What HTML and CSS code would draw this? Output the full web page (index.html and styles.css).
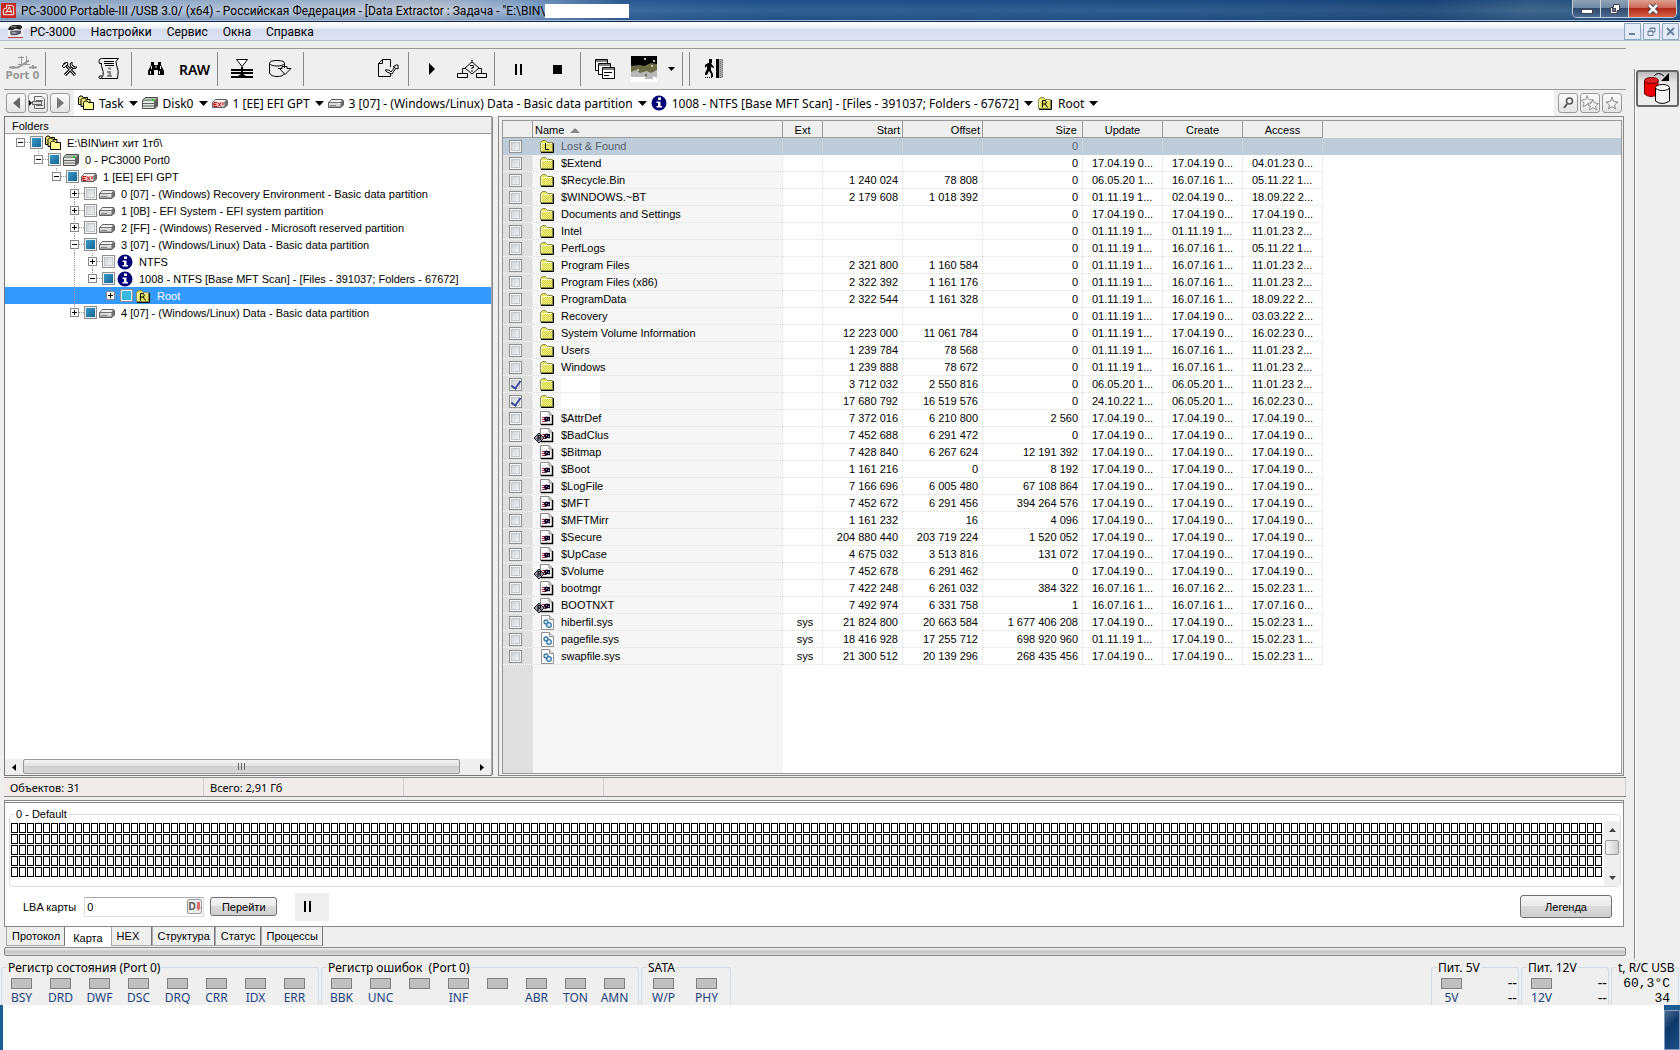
FILE: index.html
```html
<!DOCTYPE html>
<html lang="ru">
<head>
    <meta charset="UTF-8">
    <meta name="viewport" content="width=device-width, initial-scale=1.0">
    <title>PC-3000 Portable-III - Data Extractor</title>
    <link rel="stylesheet" href="styles.css">
</head>
<body>
    <!-- Набор иконок -->
    <svg class="sprite" width="0" height="0" aria-hidden="true">
        <defs>
            <pattern id="dither" width="2" height="2" patternUnits="userSpaceOnUse">
                <rect width="2" height="2" fill="#f2f27c"/><rect width="1" height="1" fill="#d4d44c"/><rect x="1" y="1" width="1" height="1" fill="#d4d44c"/>
            </pattern>
        </defs>
        <symbol id="i-folder" viewBox="0 0 16 16">
            <path d="M1.5 13.5V4.5L3.5 2.5H6.5L8.5 4.5H13.5V13.5Z" fill="url(#dither)" stroke="#8a8a4a"/>
            <path d="M14.5 5V14.5H2" fill="none" stroke="#000"/><path d="M2.500 12.500V5.500H12.500" fill="none" stroke="#fbfbc8"/>
        </symbol>
        <symbol id="i-root" viewBox="0 0 16 16">
            <use href="#i-folder"/><path d="M5.500 12.500V5.500H8.500Q10 7 8.500 9H6M8 9L10.500 12.500" fill="none" stroke="#000"/>
        </symbol>
        <symbol id="i-lost" viewBox="0 0 16 16">
            <use href="#i-folder"/><path d="M6.500 5V11.500H10" fill="none" stroke="#000"/>
        </symbol>
        <symbol id="i-task" viewBox="0 0 16 16">
            <path d="M.5 9.500V2.500L2 1H4L5.500 2.500H9.500V9.500Z" fill="#e8e070" stroke="#000"/>
            <path d="M3 11.500V4.500L4.500 3H6.500L8 4.500H12V11.500Z" fill="#e8e070" stroke="#000"/>
            <path d="M5.500 14.500V7.500L7 6H9L10.500 7.500H15.500V14.500Z" fill="#ffff90" stroke="#000"/>
        </symbol>
        <symbol id="i-disk" viewBox="0 0 16 16">
            <path d="M3 2.500H15.500V11L13 13.500H.5V5.500Z" fill="#606060" stroke="#505050"/>
            <path d="M3 3H15L13 5.500H1Z" fill="#a8b8a8"/><path d="M1 6H12V8H1ZM1 9H12V10.500H1ZM1 11.500H12V13H1Z" fill="#e4e8e4"/>
            <rect x="10" y="4" width="2" height="2" fill="#20d020"/>
        </symbol>
        <symbol id="i-part" viewBox="0 0 16 16">
            <path d="M3.500 4.500H14.500L15.500 6V10L13 12.500H.5V7.500Z" fill="#707070" stroke="#606060"/>
            <path d="M3.500 5H14L12.500 7H1.500Z" fill="#f0f0f0"/><path d="M1 8H12.500V11.500H1Z" fill="#d8d8d8"/><path d="M2 10.500H8" stroke="#888"/><rect x="10" y="8" width="2" height="1" fill="#fff"/>
        </symbol>
        <symbol id="i-ex" viewBox="0 0 16 16">
            <use href="#i-part"/><path d="M1 7H12V12H1Z" fill="#f0c8c8"/>
            <path d="M5 7.500H2V11.500H5M2 9.500H4.500M6 7.500L9 11.500M9 7.500L6 11.500M11 7.500V10" fill="none" stroke="#c00000"/>
        </symbol>
        <symbol id="i-info" viewBox="0 0 16 16">
            <circle cx="8" cy="8" r="7.500" fill="#000078"/><path d="M7 2.500H10V5H7ZM5.500 6.500H9.500V11H11V12.500H5.500V11H7V8H5.500Z" fill="#fff"/>
        </symbol>
        <symbol id="i-file" viewBox="0 0 16 16">
            <path d="M1.500 14.500V1.500H10L13.500 5V14.500Z" fill="#fff" stroke="#888"/><path d="M13.500 5V14.500H2" fill="none" stroke="#000" stroke-width="1.500"/><path d="M10 1.500V5H13" fill="none" stroke="#888"/>
            <path d="M3 7.500H6M3 9.500H6M3 11.500H6" stroke="#b02040"/><path d="M5 8L7 6.500L10 7L11 6.500V11.500L9 11L8 11.500L6 12Z" fill="#100020"/><path d="M7 8.500H8M9 9.500H10" stroke="#a0a8e0"/>
        </symbol>
        <symbol id="i-resident" viewBox="0 0 20 16">
            <path d="M0 11L5 6L10 11L5 16Z" fill="#9898a8" stroke="#202030"/><path d="M4 14V8.500H6.500V11H4M5.500 11L7 13" fill="none" stroke="#000"/>
        </symbol>
        <symbol id="i-sys" viewBox="0 0 16 16">
            <path d="M2.500 15.500V1.500H10.500L14.500 5.500V15.500Z" fill="#fcfcfc" stroke="#909090"/><path d="M10.500 1.500V5.500H14.500" fill="#e0e0e0" stroke="#909090"/>
            <circle cx="7" cy="8" r="2" fill="#d8ecfa" stroke="#3878a8" stroke-width="1.300"/><circle cx="10" cy="11" r="2.300" fill="#d8ecfa" stroke="#3878a8" stroke-width="1.300"/>
        </symbol>
    </svg>

    <header class="titlebar">
        <svg class="app-logo" viewBox="0 0 16 16"><rect width="16" height="16" fill="#c42a22"/><path d="M2.500 12.500V8Q2.500 5.500 6 5.500V2.500H11Q13.500 2.500 13.500 5.500V12.500ZM5 11L9 4L11.500 11M5 9H11" fill="none" stroke="#fff"/></svg>
        <h1>PC-3000 Portable-III /USB 3.0/ (x64) - Российская Федерация - [Data Extractor : Задача - "E:\BIN\</h1>
        <span class="title-blank"></span>
        <div class="win-buttons">
            <button type="button" aria-label="Свернуть"><svg width="12" height="12"><rect x="0.500" y="6.500" width="11" height="4" fill="#fff" stroke="#445"/></svg></button>
            <button type="button" aria-label="Восстановить"><svg width="12" height="12"><path d="M4.500 1.500H10.500V7.500H8V10.500H1.500V4.500H4.500Z" fill="#fff" stroke="#445"/><rect x="3.500" y="5.500" width="3" height="3" fill="#778" stroke="#445"/></svg></button>
            <button type="button" class="win-close" aria-label="Закрыть"><svg width="12" height="12"><path d="M2 2L10 10M10 2L2 10" stroke="#434" stroke-width="4.500"/><path d="M2 2L10 10M10 2L2 10" stroke="#fff" stroke-width="2.500"/></svg></button>
        </div>
    </header>

    <nav class="menubar">
        <svg class="menu-logo" viewBox="0 0 16 16"><rect width="16" height="13" fill="#f4f4f4"/><path d="M0 6Q1 1 7 1H12Q15 1 15 4L13 6L8 5L4 7Z" fill="#222"/><path d="M3 3H9" stroke="#999"/><path d="M2 8L8 7L14 7V10L9 12H3Z" fill="#556"/><path d="M4 9.500H9" stroke="#ddd"/><path d="M0 14.500H16" stroke="#b83030"/></svg>
        <a href="#">PC-3000</a>
        <a href="#">Настройки</a>
        <a href="#">Сервис</a>
        <a href="#">Окна</a>
        <a href="#">Справка</a>
        <div class="mdi-buttons">
            <button type="button" aria-label="Свернуть окно"><svg width="9" height="9"><path d="M1 7H7" stroke="#68809a" stroke-width="2"/></svg></button>
            <button type="button" aria-label="Восстановить окно"><svg width="9" height="9"><path d="M3 3V1H8V5H6M3 1.500H8M1 4H6V8.500H1ZM1 4.500H6" fill="none" stroke="#68809a"/></svg></button>
            <button type="button" aria-label="Закрыть окно"><svg width="9" height="9"><path d="M1 1L8 8M8 1L1 8" stroke="#68809a" stroke-width="2"/></svg></button>
        </div>
    </nav>

    <div class="workspace">
        <main>
            <div class="toolbar">
                <div class="tool-group first">
                    <button type="button" class="port" disabled><svg width="28" height="13"><path d="M12.500 0V8M17.500 0V8M9 1.500H15M9 8.500H21" stroke="#999"/><path d="M0 11.500H9L20 4.500M20 11.500H28M4 10V13M24 9V13" fill="none" stroke="#999" stroke-width="2"/></svg><span>Port 0</span></button>
                </div>
                <div class="tool-group">
                    <button type="button" aria-label="Инструменты"><svg width="16" height="16"><path d="M2 2L13 14M3 14L12 5" stroke="#000" stroke-width="3"/><path d="M3 3L13 14M3 14L12 5" stroke="#fff"/><path d="M0 5L5 1L6 3L2 7ZM10 1V4L12 6H15L13 8L9 6L8 3Z" fill="#fff" stroke="#000"/></svg></button>
                    <button type="button" aria-label="Информация"><svg width="22" height="24"><path d="M3.500 1.500H20.500Q16.500 4 18.500 8Q21.500 14 19.500 21.500H3Q7 18 4 11Q3 8 3.500 6.500H1.500Q0 2 3.500 1.500ZM3 21.500Q0 22 1.500 19H4" fill="none" stroke="#000"/><path d="M6 4.500H16M6 6.500H16M7 8.500H16" stroke="#000"/><path d="M10 10.500H13V12.500H10ZM9 14H13V18H14V20H9V18H10.500V16H9Z" fill="#888"/></svg></button>
                </div>
                <div class="tool-group">
                    <button type="button" aria-label="Поиск"><svg width="16" height="14"><path d="M3 0H6V3H10V0H13V3L16 9V13H10V8H6V13H0V9L3 3Z"/><path d="M3.500 4V7M12.500 4V7M2.500 9V12M11.500 9V12M8 3.500V6" stroke="#eee"/></svg></button>
                    <button type="button" class="raw">RAW</button>
                </div>
                <div class="tool-group">
                    <button type="button" aria-label="Фильтр"><svg width="22" height="20"><path d="M5.500 .5H16.500L11 7.500Z" fill="#fff" stroke="#000"/><path d="M0 10H22V12H0ZM0 13H22V15H0ZM0 17H7L10 15H12L15 17H22V19H0ZM10 8H12V18H10Z"/></svg></button>
                    <button type="button" aria-label="Сохранить диск"><svg width="23" height="18"><path d="M.5 3.500Q.5 .5 8 .5T15.500 3.500V8M.5 3.500V13Q2 16.500 8 16.500T15.500 13.500M.5 3.500Q2 6 8 6T15.500 3.500M9 8.500H13V6.500H18V8.500H22L16 14.500L11 9" fill="none" stroke="#000"/></svg></button>
                </div>
                <div class="tool-group wide">
                    <button type="button" aria-label="Экспорт"><svg width="22" height="20"><path d="M13.500 8V.5H5.500L1.500 4.500V17.500H13.500V13M1.500 4.500H5.500V.5" fill="none" stroke="#000"/><path d="M8 11H12L14 13L18 8H16L19 6H21V10L19 9L15 15L10 13Z" fill="#fff" stroke="#000"/></svg></button>
                </div>
                <div class="tool-group">
                    <button type="button" aria-label="Старт"><svg width="7" height="12"><path d="M0 0L6 6L0 12Z"/></svg></button>
                    <button type="button" aria-label="Схема"><svg width="30" height="21"><path d="M15 1V3M15 3L22 9L15 15L8 9ZM9 9.500H5.500V14M21 9.500H24.500V14M.5 14.500H10.500V18.500H.5ZM19.500 14.500H29.500V18.500H19.500Z" fill="none" stroke="#000"/><path d="M13 6.500H16.500V8.500H15V10M15 11V13" fill="none" stroke="#000"/></svg></button>
                </div>
                <div class="tool-group">
                    <button type="button" aria-label="Пауза"><svg width="8" height="11"><path d="M0 0H2V11H0ZM5 0H7V11H5Z"/></svg></button>
                    <button type="button" aria-label="Стоп"><svg width="9" height="9"><rect width="9" height="9"/></svg></button>
                </div>
                <div class="tool-group">
                    <button type="button" aria-label="Окна"><svg width="20" height="20"><g fill="#fff" stroke="#000"><path d="M.5 .5H12.500V11.500H.5ZM.5 2H12.500"/><path d="M3.500 4.500H15.500V15.500H3.500ZM3.500 6H15.500"/><path d="M7.500 8.500H19.500V19.500H7.500ZM7.500 10H19.500"/></g><path d="M9 13.500H17M9 16.500H14" stroke="#000"/></svg></button>
                    <button type="button" aria-label="Карта"><svg width="26" height="26"><rect width="26" height="26" fill="#000"/><path d="M0 10L8 9L13 10L20 7L26 8V26H0Z" fill="#6a6a44"/><path d="M0 16L5 14L9 17L16 15L20 17L26 14V26H0Z" fill="#b8b8b8"/><path d="M0 21H14V23H22V20L26 22V26H0Z" fill="#fff"/><path d="M13 2H15V4H13ZM22 4H24V6H22ZM20 9H22V11H20ZM6 13H8V15H6Z" fill="#c8c8a8"/><path d="M14 18H16V20H14ZM19 14H21V16H19Z" fill="#6a6a44"/></svg></button>
                    <button type="button" class="drop" aria-label="Выбор карты"><svg width="7" height="4"><path d="M0 0H7L3.500 4Z"/></svg></button>
                </div>
                <div class="tool-group exit">
                    <button type="button" aria-label="Выход"><svg width="18" height="20"><path d="M4 0H7V4H6L8 7L9 8V9L6 8V11L8 15V18H6V15L4 12L2 16H0V14L2 10V7L0 9V6L3 4H4Z"/><path d="M0 18.500H8" stroke="#000" stroke-dasharray="1 1"/><rect x="11" width="3" height="19"/><rect x="14" width="4" height="19" fill="#aaa"/><path d="M15.500 0V19M17.500 1V19" stroke="#777" stroke-dasharray="1 1"/></svg></button>
                </div>
            </div>

            <div class="crumbs">
                <div class="crumb-nav">
                    <button type="button" aria-label="Назад"><svg width="7" height="12"><path d="M7 0V12L0 6Z" fill="#666"/></svg></button>
                    <button type="button" aria-label="История"><svg width="18" height="16"><path d="M0 5L3 8L0 11Z"/><path d="M5.500 1.500H13L15.500 4V13.500H5.500ZM7 5.500H14M7 10.500H14" fill="none" stroke="#666"/><rect x="3.500" y="6.500" width="9" height="3" fill="#ddd" stroke="#666"/></svg></button>
                    <button type="button" aria-label="Вперёд"><svg width="7" height="12"><path d="M0 0V12L7 6Z" fill="#777"/></svg></button>
                </div>
                <nav class="crumb-path" id="crumb-path"></nav>
                <div class="crumb-tools">
                    <button type="button" aria-label="Найти"><svg width="14" height="14"><circle cx="8.500" cy="5" r="3" fill="none" stroke="#555" stroke-width="1.500"/><path d="M6 8L3 12" stroke="#555" stroke-width="2"/></svg></button>
                    <button type="button" aria-label="Все закладки"><svg width="18" height="16"><path d="M6 .5L7.500 4.500L12 5L9 8L10 12L6 9.500L2 12L3 8L.5 5L5 4.500Z" fill="#f4f4f4" stroke="#999"/><path d="M12 4.500L13.500 8L17.500 8.500L14.500 11L15.500 15L12 12.500L8.500 15L9.500 11L6.500 8.500L10.500 8Z" fill="#f4f4f4" stroke="#999"/></svg></button>
                    <button type="button" aria-label="Закладка"><svg width="14" height="14"><path d="M7 1L8.500 5.500L13 6L9.500 9L10.500 13L7 10.500L3.500 13L4.500 9L1 6L5.500 5.500Z" fill="#f4f4f4" stroke="#888"/></svg></button>
                </div>
            </div>

            <div class="panels">
                <section class="folders">
                    <h2>Folders</h2>
                    <div class="tree" id="tree"></div>
                    <div class="hscroll">
                        <button type="button" aria-label="Влево"><svg width="4" height="7"><path d="M4 0V7L0 3.500Z"/></svg></button>
                        <div class="hscroll-track"><div class="hscroll-thumb"><svg width="9" height="7"><path d="M1.500 0V7M4.500 0V7M7.500 0V7" stroke="#666"/></svg></div></div>
                        <button type="button" aria-label="Вправо"><svg width="4" height="7"><path d="M0 0V7L4 3.500Z"/></svg></button>
                    </div>
                </section>
                <section class="files">
                    <div class="files-inner">
                        <table>
                            <colgroup>
                                <col class="c-check"><col class="c-name"><col class="c-ext"><col class="c-num"><col class="c-num">
                                <col class="c-size"><col class="c-date"><col class="c-date"><col class="c-date"><col>
                            </colgroup>
                            <thead>
                                <tr>
                                    <th></th>
                                    <th class="left">Name <svg width="10" height="5"><path d="M5 0L10 5H0Z" fill="#888"/></svg></th>
                                    <th>Ext</th>
                                    <th class="right">Start</th>
                                    <th class="right">Offset</th>
                                    <th class="right size">Size</th>
                                    <th>Update</th>
                                    <th>Create</th>
                                    <th>Access</th>
                                    <th class="rest"></th>
                                </tr>
                            </thead>
                            <tbody id="file-rows"></tbody>
                        </table>
                    </div>
                </section>
            </div>

            <div class="statusbar">
                <span>Объектов: 31</span>
                <span>Всего: 2,91 Гб</span>
                <span></span>
                <span></span>
            </div>

            <section class="map-panel">
                <fieldset class="map-box">
                    <legend>0 - Default</legend>
                    <div class="map-cells" id="map-cells"></div>
                    <div class="vscroll">
                        <button type="button" aria-label="Вверх"><svg width="7" height="4"><path d="M0 4H7L3.500 0Z" fill="#444"/></svg></button>
                        <div class="vscroll-thumb"></div>
                        <button type="button" aria-label="Вниз"><svg width="7" height="4"><path d="M0 0H7L3.500 4Z" fill="#444"/></svg></button>
                    </div>
                </fieldset>
                <div class="map-controls">
                    <label for="lba">LBA карты</label>
                    <div class="lba-field">
                        <input type="text" id="lba" value="0">
                        <button type="button" aria-label="Десятичный">D<svg width="5" height="9"><path d="M1 0H4V5H5L2.500 9L0 5H1Z" fill="#e07070"/></svg></button>
                    </div>
                    <button type="button" class="push go">Перейти</button>
                    <button type="button" class="pause" aria-label="Пауза"><svg width="8" height="11"><path d="M0 0H2V11H0ZM5 0H7V11H5Z"/></svg></button>
                    <button type="button" class="push legend">Легенда</button>
                </div>
            </section>

            <div class="tabs">
                <button type="button">Протокол</button>
                <button type="button" class="active">Карта</button>
                <button type="button" class="hex">HEX</button>
                <button type="button">Структура</button>
                <button type="button">Статус</button>
                <button type="button">Процессы</button>
            </div>
            <div class="gutter"></div>
        </main>

        <aside class="side">
            <button type="button" aria-label="Data Extractor"><svg width="28" height="33"><path d="M.5 9V22Q7 27 14 22V9" fill="#f00000" stroke="#600"/><ellipse cx="7.500" cy="8.500" rx="7" ry="3" fill="#e02020" stroke="#600"/><path d="M11.500 16V29Q18 34 25.500 29V16" fill="#f4f4f4" stroke="#000"/><ellipse cx="18.500" cy="15.500" rx="7" ry="3" fill="#fff" stroke="#000"/><path d="M10 4Q14 -1 20 4" fill="none" stroke="#000"/><path d="M25 1V9H17Z"/></svg></button>
        </aside>
    </div>

    <footer class="registers">
        <fieldset class="reg">
            <legend>Регистр состояния (Port 0)</legend>
            <div class="leds" data-leds="BSY DRD DWF DSC DRQ CRR IDX ERR"></div>
        </fieldset>
        <fieldset class="reg">
            <legend>Регистр ошибок&nbsp; (Port 0)</legend>
            <div class="leds" data-leds="BBK UNC - INF - ABR TON AMN"></div>
        </fieldset>
        <fieldset class="reg sata">
            <legend>SATA</legend>
            <div class="leds" data-leds="W/P PHY"></div>
        </fieldset>
        <fieldset class="reg power">
            <legend>Пит. 5V</legend>
            <div class="leds" data-leds="5V"></div>
            <div class="volts"><span>--</span><span>--</span></div>
        </fieldset>
        <fieldset class="reg power">
            <legend>Пит. 12V</legend>
            <div class="leds" data-leds="12V"></div>
            <div class="volts"><span>--</span><span>--</span></div>
        </fieldset>
        <fieldset class="reg temp">
            <legend>t, R/C USB</legend>
            <div class="volts"><span>60,3°C</span><span>34</span></div>
        </fieldset>
    </footer>
    <div class="desktop"><div class="desktop-blank"></div><div class="desktop-edge"></div></div>

    <script src="script.js"></script>
</body>
</html>
```
FILE: styles.css
```css
* {
    box-sizing: border-box;
}

body {
    margin: 0;
    height: 100vh;
    display: flex;
    flex-direction: column;
    overflow: hidden;
    background: #efefef;
    color: #000;
    font-family: "Liberation Sans", Arial, sans-serif;
    font-size: 11px;
}

button,
input {
    font: inherit;
    color: inherit;
    margin: 0;
}

button {
    display: flex;
    align-items: center;
    justify-content: center;
    padding: 0;
    border: none;
    background: none;
}

svg {
    display: block;
    flex: none;
}

a {
    color: inherit;
    text-decoration: none;
}

fieldset {
    margin: 0;
    padding: 0;
    min-width: 0;
}

.sprite {
    position: absolute;
}

.icon {
    width: 16px;
    height: 16px;
}

/* Заголовок окна */
.titlebar {
    display: flex;
    align-items: center;
    flex: none;
    height: 22px;
    padding-left: 1px;
    border-bottom: 1px solid #14284a;
    box-shadow: inset 0 -1px 0 #a8c0dc;
    background:
        linear-gradient(to bottom, rgba(40, 80, 130, 0.2), rgba(255, 255, 255, 0.1) 50%, rgba(40, 80, 130, 0.35)),
        linear-gradient(to right, #9cb2cf 0, #b4c4d8 18%, #c0c8d4 26%, #8facd0 31%, #2a5b94 37%, #1b4f88 45%, #194a82 70%, #143f72 85%, #2c567f 91%, #1d4a7c 100%);
}

.app-logo {
    width: 15px;
    height: 15px;
    margin-right: 5px;
}

.titlebar h1 {
    margin: 0;
    font-family: Roboto, "Noto Sans", sans-serif;
    font-size: 12px;
    font-weight: normal;
    white-space: nowrap;
}

.title-blank {
    width: 84px;
    height: 14px;
    background: #fff;
}

.win-buttons {
    display: flex;
    align-self: flex-start;
    height: 18px;
    margin-left: auto;
    margin-right: 3px;
    border: 1px solid #c0ccda;
    border-top: none;
    border-radius: 0 0 5px 5px;
    overflow: hidden;
}

.win-buttons button {
    width: 28px;
    border-right: 1px solid #d0d8e0;
    background: linear-gradient(#8fa3b8, #7289a4 45%, #2e4a6c 50%, #4b6a90);
}

.win-buttons .win-close {
    width: 47px;
    border-right: none;
    background: linear-gradient(#e0a090, #cc6a58 45%, #b02a18 50%, #d8604a);
}

/* Меню */
.menubar {
    display: flex;
    align-items: center;
    flex: none;
    height: 19px;
    padding-left: 8px;
    gap: 15px;
    border-bottom: 1px solid #b4b9cb;
    background: linear-gradient(#fff, #edf0f8 35%, #d5dbee 40%, #dfe4f4);
    font-family: Roboto, "Noto Sans", sans-serif;
    font-size: 12px;
    line-height: 18px;
}

.menubar a {
    padding-top: 2px;
}

.menu-logo {
    width: 15px;
    height: 15px;
    margin-right: -8px;
}

.mdi-buttons {
    display: flex;
    gap: 2px;
    margin-left: auto;
    margin-right: 1px;
}

.mdi-buttons button {
    width: 17px;
    height: 17px;
    border: 1px solid #8ea8bf;
    background: #e2ecf8;
}

.workspace {
    display: flex;
    flex: 1;
    min-height: 0;
}

main {
    display: flex;
    flex-direction: column;
    flex: 1;
    min-width: 0;
    padding: 7px 8px 3px 4px;
}

.side {
    align-self: stretch;
    width: 46px;
    margin-top: 28px;
    border-left: 1px solid #888;
    box-shadow: inset 1px 0 0 #fff;
}

.side button {
    width: 43px;
    height: 37px;
    margin: 1px;
    border: 2px solid #666;
    border-radius: 3px;
    background: linear-gradient(#bbb, #e4e4e4 30%, #eee);
}

/* Панель инструментов */
.toolbar {
    display: flex;
    flex: none;
    height: 42px;
    padding: 3px 0;
    border-top: 1px solid #999;
    border-bottom: 1px solid #999;
}

.tool-group {
    display: flex;
    align-items: center;
    gap: 2px;
    padding: 0 4px 0 5px;
    border-right: 1px solid #888;
}

.tool-group button {
    width: 37px;
    height: 34px;
}

.tool-group.first {
    padding: 0 4px 0 0;
}

.tool-group.wide {
    justify-content: flex-end;
    width: 105px;
    padding-right: 2px;
}

.tool-group .port {
    flex-direction: column;
    color: #999;
    font-family: "DejaVu Sans Condensed", "DejaVu Sans", sans-serif;
    font-size: 11px;
    font-weight: bold;
    line-height: 13px;
    white-space: nowrap;
}

.tool-group .raw {
    font-family: "Noto Sans", sans-serif;
    font-size: 14px;
    font-weight: 600;
}

.tool-group .drop {
    width: 14px;
}

.tool-group.exit {
    margin-left: 6px;
    border-left: 1px solid #888;
    border-right: none;
}

.crumbs {
    display: flex;
    flex: none;
    height: 26px;
}

.crumb-nav,
.crumb-tools {
    display: flex;
    align-items: center;
    gap: 2px;
    padding: 0 4px 0 2px;
}

.crumb-tools {
    padding: 0 4px;
}

.crumb-nav button,
.crumb-tools button {
    width: 20px;
    height: 20px;
    border: 1px solid #999;
    border-radius: 3px;
    background: linear-gradient(#fafafa, #e4e4e4);
}

.crumb-path {
    display: flex;
    align-items: center;
    flex: 1;
    gap: 4px;
    padding-left: 4px;
    background: #fff;
    font-family: "Noto Sans", sans-serif;
    font-size: 12px;
    white-space: nowrap;
}

.crumb {
    display: flex;
    align-items: center;
    gap: 5px;
}

/* Панели */
.panels {
    display: flex;
    flex: 1;
    min-height: 0;
    gap: 6px;
    margin-right: 2px;
}

.folders {
    display: flex;
    flex-direction: column;
    width: 488px;
    flex: none;
    border: 1px solid #777;
    border-right-color: #aaa;
    box-shadow: 2px 0 0 -1px #888;
    background: #fff;
}

.folders h2 {
    margin: 0;
    height: 17px;
    padding-left: 7px;
    border-bottom: 1px solid #999;
    background: #efefef;
    font-size: 11px;
    line-height: 19px;
    font-weight: normal;
}

.tree {
    flex: 1;
}

.tree-row {
    display: flex;
    align-items: center;
    height: 17px;
    padding-left: 7px;
    white-space: nowrap;
}

.tree-row.selected {
    background: #3399ff;
    color: #fff;
}

.guide {
    width: 18px;
    height: 17px;
    flex: none;
}

.guide.line,
.expander {
    background: repeating-linear-gradient(#999 0 1px, transparent 1px 2px) 8px 0 / 1px 100% no-repeat;
}

.expander {
    display: flex;
    align-items: center;
    width: 18px;
    height: 17px;
    padding-left: 4px;
    flex: none;
}

.expander::after {
    content: "";
    width: 5px;
    border-top: 1px dotted #999;
}

.expander.last {
    background-size: 1px 50%;
}

.expander.top {
    background: none;
}

.expander button {
    width: 9px;
    height: 9px;
    border: 1px solid #888;
    background:
        linear-gradient(#000, #000) center / 5px 1px no-repeat,
        #fff;
}

.expander button.plus {
    background:
        linear-gradient(#000, #000) center / 5px 1px no-repeat,
        linear-gradient(#000, #000) center / 1px 5px no-repeat,
        #fff;
}

.tree-row .icon {
    margin: 0 6px 0 2px;
}

input[type="checkbox"] {
    appearance: none;
    display: grid;
    place-items: center;
    flex: none;
    width: 13px;
    height: 13px;
    border: 1px solid #8e8f8f;
    background: linear-gradient(135deg, #c8ccd0, #f8f8f8);
    box-shadow: inset 0 0 0 1px #f4f4f4, inset 0 0 0 2px #c4c8cc;
}

input[type="checkbox"]:checked::after {
    content: "";
    width: 4px;
    height: 8px;
    margin-bottom: 2px;
    border: solid #3a4a9c;
    border-width: 0 2px 2px 0;
    transform: rotate(35deg);
}

input[type="checkbox"]:indeterminate {
    background: linear-gradient(135deg, #3ca0d0, #11608e);
    box-shadow: inset 0 0 0 1px #e8f0f4;
}

.selected input[type="checkbox"]:indeterminate {
    background: #38b8dc;
}

/* Таблица файлов */
.files {
    flex: 1;
    min-width: 0;
    padding: 3px 1px 1px 3px;
    border: 1px solid #888;
}

.files-inner {
    height: 100%;
    border: 1px solid #999;
    background: linear-gradient(to right, #dfdfdf 0 30px, #f6f6f6 30px 280px, #fff 280px);
}

table {
    width: 100%;
    table-layout: fixed;
    border-collapse: separate;
    border-spacing: 0;
}

.c-check { width: 30px; }
.c-name { width: 250px; }
.c-ext { width: 40px; }
.c-num { width: 80px; }
.c-size { width: 100px; }
.c-date { width: 80px; }

th {
    height: 17px;
    padding: 2px 2px 0;
    border-right: 1px solid #999;
    border-bottom: 1px solid #999;
    background: #efefef;
    font-weight: normal;
    text-align: center;
    line-height: 14px;
}

th.left {
    text-align: left;
}

th.left svg {
    display: inline-block;
    vertical-align: 1px;
    margin-left: 3px;
}

th.right {
    text-align: right;
}

th.size {
    padding-right: 5px;
}

th.rest {
    border-right: none;
    border-bottom-color: #efefef;
}

td {
    height: 17px;
    padding: 0 4px;
    border-right: 1px dotted #e0e0e0;
    border-bottom: 1px dotted #e0e0e0;
    line-height: 15px;
    white-space: nowrap;
    overflow: hidden;
}

td:first-child {
    padding-left: 6px;
    border-color: #f8f8f8;
}

td:last-child {
    border: none;
}

td.num {
    text-align: right;
}

td.date {
    padding-left: 9px;
}

td.ext {
    text-align: center;
    padding-left: 9px;
}

.file-name {
    display: flex;
    align-items: center;
    gap: 6px;
    height: 16px;
    padding-left: 2px;
}

.file-icon {
    position: relative;
}

.file-icon .resident {
    position: absolute;
    left: -5px;
    top: 0;
    width: 20px;
    height: 16px;
}

.name-blank {
    width: 39px;
    height: 16px;
    background: #fff;
}

tr.lost td {
    background: #bfcddb;
    border-bottom-color: #bfcddb;
    color: #566068;
}

tr.lost td:first-child {
    border-right-color: #bfcddb;
}

.statusbar {
    display: flex;
    flex: none;
    height: 20px;
    margin-top: 1px;
    border-top: 1px solid #888;
    border-bottom: 1px solid #888;
    background: #f0ecec;
    font-family: "Noto Sans", sans-serif;
    line-height: 19px;
}

.statusbar span {
    width: 200px;
    padding-left: 6px;
    border-right: 1px solid #ccc;
}

.statusbar span:last-child {
    flex: 1;
}

/* Карта */
.map-panel {
    flex: none;
    height: 127px;
    margin: 3px 2px 0 0;
    padding: 0 2px 0 4px;
    border: 1px solid #888;
    border-top: 3px double #888;
    background: #fff;
}

.map-box {
    display: flex;
    height: 79px;
    margin-top: 5px;
    padding-left: 1px;
    border: 1px solid #ddd;
    border-radius: 4px;
}

.map-box legend {
    margin-left: 4px;
    padding: 0 1px;
    font-size: 11px;
    line-height: 13px;
}

.map-cells {
    display: grid;
    grid-template-columns: repeat(auto-fill, 7px);
    grid-auto-rows: 10px;
    gap: 1px;
    flex: 1;
    height: 54px;
    margin-top: 2px;
    overflow: hidden;
}

.map-cells i {
    border: 1px solid #000;
}

.vscroll {
    display: flex;
    flex-direction: column;
    align-items: center;
    gap: 2px;
    width: 16px;
    background: #efefef;
}

.vscroll button {
    width: 16px;
    height: 17px;
}

.vscroll-thumb {
    width: 14px;
    height: 15px;
    border: 1px solid #999;
    border-radius: 2px;
    background: linear-gradient(to right, #f6f6f6, #d0d0d0);
}

.vscroll button:last-child {
    margin-top: auto;
}

.hscroll {
    display: flex;
    flex: none;
    height: 16px;
    background: #efefef;
}

.hscroll > button {
    width: 18px;
}

.hscroll-track {
    flex: 1;
}

.hscroll-thumb {
    display: flex;
    align-items: center;
    justify-content: center;
    width: 97%;
    height: 15px;
    border: 1px solid #999;
    border-radius: 2px;
    background: linear-gradient(#f4f4f4, #e2e2e2 45%, #cfcfcf 50%, #d8d8d8);
}

.map-controls {
    display: flex;
    align-items: center;
    height: 39px;
    padding: 0 9px 0 14px;
}

.lba-field {
    display: flex;
    align-items: center;
    width: 120px;
    height: 20px;
    margin-left: 8px;
    border: 1px solid #ddd;
    border-top-color: #aaa;
}

.lba-field input {
    flex: 1;
    min-width: 0;
    padding: 0 2px;
    border: none;
    outline: none;
    background: none;
}

.lba-field button {
    width: 15px;
    height: 15px;
    margin-right: 1px;
    border: 1px solid #999;
    border-radius: 2px;
    background: #eee;
    color: #555;
    font-size: 10px;
    font-weight: bold;
}

.push {
    border: 1px solid #707070;
    border-radius: 3px;
    background: linear-gradient(#f4f4f4, #ebebeb 50%, #dadada 50%, #cfcfcf);
}

.push.go {
    width: 67px;
    height: 19px;
    margin-left: 6px;
}

.push.legend {
    width: 92px;
    height: 23px;
    margin-left: auto;
}

.pause {
    width: 34px;
    height: 28px;
    margin-left: 18px;
    padding-right: 8px;
    background: #efefef;
}

.tabs {
    display: flex;
    flex: none;
    align-items: flex-start;
    height: 20px;
    padding-left: 2px;
}

.tabs button {
    height: 19px;
    padding: 0 4px 0 5px;
    border: 1px solid #aaa;
    border-top: none;
    border-right-color: #777;
}

.tabs .active {
    height: 20px;
    padding-top: 3px;
    padding-left: 7px;
    padding-right: 7px;
    border-color: #fff;
    background: #fff;
}

.tabs .hex {
    justify-content: flex-start;
    width: 41px;
}

.gutter {
    flex: none;
    height: 9px;
    border: 1px solid #888;
    border-radius: 2px;
    background: linear-gradient(#f2f2f2, #c8c8c8 50%, #d8d8d8);
}

/* Регистры */
.registers {
    display: flex;
    flex: none;
    gap: 2px;
    height: 46px;
    padding: 0 1px;
    font-family: "Noto Sans", sans-serif;
    font-size: 12px;
}

.reg {
    display: flex;
    flex: none;
    justify-content: space-between;
    width: 318px;
    padding: 2px 1px 0 0;
    border: 1px solid #d3dae2;
    border-bottom: none;
    border-radius: 3px 3px 0 0;
}

.reg legend {
    margin-left: 5px;
    padding: 0 1px;
    line-height: 17px;
    white-space: nowrap;
}

.leds {
    display: flex;
    align-items: flex-start;
}

.led {
    display: flex;
    flex-direction: column;
    align-items: center;
    width: 39px;
    color: #1d4480;
    line-height: 14px;
}

.led i {
    width: 21px;
    height: 11px;
    margin-bottom: 2px;
    border: 1px solid #808080;
    background: #c0c0c0;
}

.reg.sata {
    width: 90px;
}

.reg.sata .led {
    width: 43px;
}

.reg.power {
    width: 88px;
}

.reg.sata + .power {
    margin-left: auto;
}

.volts {
    display: flex;
    flex-direction: column;
    gap: 4px;
    margin-left: auto;
    text-align: right;
    font-family: "Liberation Sans", Arial, sans-serif;
    font-size: 14px;
    line-height: 11px;
}

.reg.temp {
    width: 68px;
    padding-right: 8px;
}

.reg.temp .volts {
    font-family: "Liberation Mono", monospace;
    font-size: 13px;
}

.desktop {
    display: flex;
    flex: none;
    height: 45px;
    background: #1c5c94;
}

.desktop-blank {
    flex: 1;
    margin-left: 3px;
    background: #fff;
}

.desktop-edge {
    width: 16px;
    margin-top: 5px;
    border: 1px solid #7d9cc0;
    background: linear-gradient(135deg, #4a6c94, #0f3868 40%, #1c4f88);
}
```
FILE: script.js
```js
const crumbs = [
    ['task', 'Task'],
    ['disk', 'Disk0'],
    ['ex', '1 [EE] EFI GPT'],
    ['part', '3 [07] - (Windows/Linux) Data - Basic data partition'],
    ['info', '1008 - NTFS [Base MFT Scan] - [Files - 391037; Folders - 67672]'],
    ['root', 'Root']
];

// уровень, знак, состояние флажка, иконка, текст, последний в ветке
const nodes = [
    [0, '-', 1, 'task', 'E:\\BIN\\инт хит 1тб\\', 1],
    [1, '-', 1, 'disk', '0 - PC3000 Port0', 1],
    [2, '-', 1, 'ex', '1 [EE] EFI GPT', 1],
    [3, '+', 0, 'part', '0 [07] - (Windows) Recovery Environment - Basic data partition', 0],
    [3, '+', 0, 'part', '1 [0B] - EFI System - EFI system partition', 0],
    [3, '+', 0, 'part', '2 [FF] - (Windows) Reserved - Microsoft reserved partition', 0],
    [3, '-', 1, 'part', '3 [07] - (Windows/Linux) Data - Basic data partition', 0],
    [4, '+', 0, 'info', 'NTFS', 0],
    [4, '-', 1, 'info', '1008 - NTFS [Base MFT Scan] - [Files - 391037; Folders - 67672]', 1],
    [5, '+', 1, 'root', 'Root', 1],
    [3, '+', 1, 'part', '4 [07] - (Windows/Linux) Data - Basic data partition', 1]
];

// имя | расширение | start | offset | size | update | create | access | иконка
const files = `Lost & Found||||0||||lost
$Extend||||0|17.04.19 0|17.04.19 0|04.01.23 0|folder
$Recycle.Bin||1 240 024|78 808|0|06.05.20 1|16.07.16 1|05.11.22 1|folder
$WINDOWS.~BT||2 179 608|1 018 392|0|01.11.19 1|02.04.19 0|18.09.22 2|folder
Documents and Settings||||0|17.04.19 0|17.04.19 0|17.04.19 0|folder
Intel||||0|01.11.19 1|01.11.19 1|11.01.23 2|folder
PerfLogs||||0|01.11.19 1|16.07.16 1|05.11.22 1|folder
Program Files||2 321 800|1 160 584|0|01.11.19 1|16.07.16 1|11.01.23 2|folder
Program Files (x86)||2 322 392|1 161 176|0|01.11.19 1|16.07.16 1|11.01.23 2|folder
ProgramData||2 322 544|1 161 328|0|01.11.19 1|16.07.16 1|18.09.22 2|folder
Recovery||||0|01.11.19 1|17.04.19 0|03.03.22 2|folder
System Volume Information||12 223 000|11 061 784|0|01.11.19 1|17.04.19 0|16.02.23 0|folder
Users||1 239 784|78 568|0|01.11.19 1|16.07.16 1|11.01.23 2|folder
Windows||1 239 888|78 672|0|01.11.19 1|16.07.16 1|11.01.23 2|folder
||3 712 032|2 550 816|0|06.05.20 1|06.05.20 1|11.01.23 2|folder
||17 680 792|16 519 576|0|24.10.22 1|06.05.20 1|16.02.23 0|folder
$AttrDef||7 372 016|6 210 800|2 560|17.04.19 0|17.04.19 0|17.04.19 0|file
$BadClus||7 452 688|6 291 472|0|17.04.19 0|17.04.19 0|17.04.19 0|resident
$Bitmap||7 428 840|6 267 624|12 191 392|17.04.19 0|17.04.19 0|17.04.19 0|file
$Boot||1 161 216|0|8 192|17.04.19 0|17.04.19 0|17.04.19 0|file
$LogFile||7 166 696|6 005 480|67 108 864|17.04.19 0|17.04.19 0|17.04.19 0|file
$MFT||7 452 672|6 291 456|394 264 576|17.04.19 0|17.04.19 0|17.04.19 0|file
$MFTMirr||1 161 232|16|4 096|17.04.19 0|17.04.19 0|17.04.19 0|file
$Secure||204 880 440|203 719 224|1 520 052|17.04.19 0|17.04.19 0|17.04.19 0|file
$UpCase||4 675 032|3 513 816|131 072|17.04.19 0|17.04.19 0|17.04.19 0|file
$Volume||7 452 678|6 291 462|0|17.04.19 0|17.04.19 0|17.04.19 0|resident
bootmgr||7 422 248|6 261 032|384 322|16.07.16 1|16.07.16 2|15.02.23 1|file
BOOTNXT||7 492 974|6 331 758|1|16.07.16 1|16.07.16 1|17.07.16 0|resident
hiberfil.sys|sys|21 824 800|20 663 584|1 677 406 208|17.04.19 0|17.04.19 0|15.02.23 1|sys
pagefile.sys|sys|18 416 928|17 255 712|698 920 960|01.11.19 1|17.04.19 0|15.02.23 1|sys
swapfile.sys|sys|21 300 512|20 139 296|268 435 456|17.04.19 0|17.04.19 0|15.02.23 1|sys`;

function icon(name) {
    return `<svg class="icon"><use href="#i-${name}"/></svg>`;
}

document.getElementById('crumb-path').innerHTML = crumbs.map(([name, text]) =>
    `<a href="#" class="crumb">${icon(name)}<span>${text}</span><svg width="9" height="5"><path d="M0 0H9L4.500 5Z"/></svg></a>`
).join('');

document.getElementById('tree').innerHTML = nodes.map(([level, sign, checked, name, text, last], n) => {
    let guides = '';
    for (let i = 0; i < level; i++) {
        guides += `<span class="guide${i === 3 ? ' line' : ''}"></span>`;
    }
    const pos = level === 0 ? ' top' : last ? ' last' : '';
    return `<div class="tree-row${text === 'Root' ? ' selected' : ''}">${guides}
        <span class="expander${pos}"><button type="button" class="${sign === '+' ? 'plus' : 'minus'}" aria-label="Развернуть"></button></span>
        <input type="checkbox" id="node-${n}"${checked ? ' data-mixed' : ''}>${icon(name)}<label for="node-${n}">${text}</label></div>`;
}).join('');

document.querySelectorAll('[data-mixed]').forEach(box => {
    box.indeterminate = true;
});

document.getElementById('file-rows').innerHTML = files.split('\n').map((line, n) => {
    const [name, ext, start, offset, size, update, create, access, type] = line.split('|');
    const resident = type === 'resident';
    const mark = resident ? '<svg class="resident"><use href="#i-resident"/></svg>' : '';
    const label = name ? name.replace('&', '&amp;') : '<span class="name-blank"></span>';
    const dates = [update, create, access].map(d => `<td class="date">${d ? d + '...' : ''}</td>`).join('');
    return `<tr${type === 'lost' ? ' class="lost"' : ''}>
        <td><input type="checkbox" aria-label="${name || 'Папка ' + n}"${name ? '' : ' checked'}></td>
        <td><div class="file-name"><span class="file-icon">${icon(resident ? 'file' : type)}${mark}</span>${label}</div></td>
        <td class="ext">${ext}</td><td class="num">${start}</td><td class="num">${offset}</td><td class="num">${size}</td>
        ${dates}<td></td></tr>`;
}).join('');

// Ячейки карты: 5 строк
const cells = document.getElementById('map-cells');
function drawMap() {
    const perRow = Math.floor((cells.clientWidth + 1) / 8);
    cells.innerHTML = '<i></i>'.repeat(perRow * 5);
}
drawMap();
window.addEventListener('resize', drawMap);

document.querySelectorAll('.leds').forEach(box => {
    box.innerHTML = box.dataset.leds.split(' ').map(name =>
        `<span class="led"><i></i>${name === '-' ? '' : name}</span>`
    ).join('');
});
```
